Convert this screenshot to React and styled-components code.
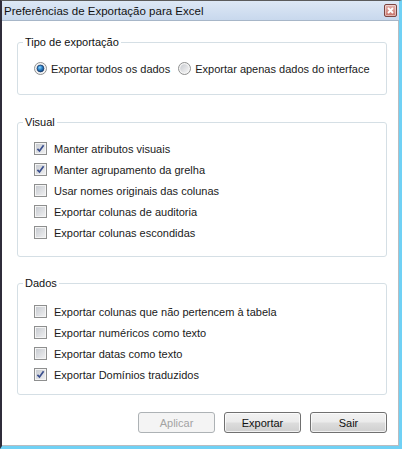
import React from "react";
import styled, { createGlobalStyle } from "styled-components";

const GlobalStyle = createGlobalStyle`
  html, body {
    margin: 0;
    padding: 0;
    background: #ffffff;
  }
  * {
    box-sizing: border-box;
  }
`;

const Window = styled.div`
  width: 402px;
  height: 449px;
  display: flex;
  flex-direction: column;
  border-top: 1px solid #5b5b5b;
  border-left: 2px solid #2f2c3a;
  border-right: 3px solid #70d1f5;
  border-bottom: 3px solid #70d1f5;
  font-family: "Liberation Sans", Arial, sans-serif;
  font-size: 11px;
  color: #1a1a1a;
`;

const TitleBar = styled.div`
  height: 20px;
  flex: none;
  display: flex;
  align-items: center;
  justify-content: space-between;
  padding: 0 2px 0 2px;
  background: linear-gradient(#dde8f5, #c8d8ed);
  border-bottom: 1px solid #a7b6c8;
`;

const Title = styled.span`
  font-size: 11.5px;
  color: #111;
  padding-top: 1px;
`;

const CloseButton = styled.span`
  width: 13px;
  height: 13px;
  display: flex;
  align-items: center;
  justify-content: center;
  border: 1px solid #7d4540;
  border-radius: 2px;
  background: linear-gradient(#e3b3ae, #c8746b);
  box-shadow: inset 0 0 0 1px rgba(255, 255, 255, 0.45);
`;

const Body = styled.div`
  flex: 1;
  display: flex;
  flex-direction: column;
  background: #ffffff;
  border-right: 1px solid #b8bcc1;
  border-bottom: 1px solid #b8bcc1;
  padding-top: 14px;
`;

const Group = styled.fieldset`
  margin: ${(p) => p.$top || 0}px 11px 0 15px;
  padding: ${(p) => p.$padTop}px 0 ${(p) => p.$padBottom}px 16px;
  border: 1px solid #d5dfe5;
  border-radius: 3px;
  min-width: 0;
`;

const Legend = styled.legend`
  margin-left: -11px;
  padding: 0 2px;
  line-height: 14px;
  color: #111;
`;

const Row = styled.label`
  height: 21px;
  display: flex;
  align-items: center;
  gap: ${(p) => p.$gap || 6}px;
  white-space: nowrap;
`;

const InlineRow = styled.div`
  display: flex;
  align-items: center;
  gap: 8px;
`;

const Box = styled.span`
  width: 13px;
  height: 13px;
  flex: none;
  display: flex;
  align-items: center;
  justify-content: center;
  border: 1px solid #8e8f8f;
  background: linear-gradient(135deg, #c4c8ce, #f2f2f3);
  box-shadow: inset 0 0 0 1px #f4f4f4;
`;

const Round = styled.svg`
  flex: none;
`;

const Footer = styled.div`
  display: flex;
  justify-content: flex-end;
  gap: 9px;
  margin: 17px 11px 0 0;
`;

const Button = styled.button`
  width: 77px;
  height: 21px;
  padding: 0;
  font-family: inherit;
  font-size: 11px;
  border-radius: 3px;
  color: ${(p) => (p.disabled ? "#a3a3a3" : "#111")};
  border: 1px solid ${(p) => (p.disabled ? "#adb2b5" : "#707070")};
  background: ${(p) =>
    p.disabled
      ? "#f4f4f4"
      : "linear-gradient(#f2f2f2 0%, #ebebeb 48%, #dddddd 52%, #cfcfcf 100%)"};
  box-shadow: ${(p) =>
    p.disabled ? "none" : "inset 0 0 0 1px rgba(255,255,255,0.7)"};
`;

const Checkbox = ({ checked, label }) => (
  <Row $gap={7}>
    <Box>
      {checked && (
        <svg width="9" height="9" viewBox="0 0 9 9">
          <path
            d="M1.4 4.8 L3.5 7 L7.6 1.2"
            fill="none"
            stroke="#3a4f8e"
            strokeWidth="1.7"
          />
        </svg>
      )}
    </Box>
    {label}
  </Row>
);

const Radio = ({ checked, label }) => (
  <Row $gap={4}>
    <Round width="13" height="13" viewBox="0 0 13 13">
      <defs>
        <linearGradient id="rg" x1="0" y1="0" x2="1" y2="1">
          <stop offset="0" stopColor="#c8cbd0" />
          <stop offset="1" stopColor="#f6f6f6" />
        </linearGradient>
        <radialGradient id="dot" cx="0.4" cy="0.35" r="0.7">
          <stop offset="0" stopColor="#8ad6ff" />
          <stop offset="0.5" stopColor="#2a7fc6" />
          <stop offset="1" stopColor="#0d3a73" />
        </radialGradient>
      </defs>
      <circle cx="6.5" cy="6.5" r="6" fill="#f4f4f4" stroke="#8e8f8f" />
      <circle cx="6.5" cy="6.5" r="4.3" fill="url(#rg)" />
      {checked && (
        <circle cx="6.5" cy="6.5" r="3.4" fill="url(#dot)" stroke="#1c3f6e" strokeWidth="0.8" />
      )}
    </Round>
    {label}
  </Row>
);

const visual = [
  { label: "Manter atributos visuais", checked: true },
  { label: "Manter agrupamento da grelha", checked: true },
  { label: "Usar nomes originais das colunas", checked: false },
  { label: "Exportar colunas de auditoria", checked: false },
  { label: "Exportar colunas escondidas", checked: false },
];

const dados = [
  { label: "Exportar colunas que não pertencem à tabela", checked: false },
  { label: "Exportar numéricos como texto", checked: false },
  { label: "Exportar datas como texto", checked: false },
  { label: "Exportar Domínios traduzidos", checked: true },
];

const App = () => {
  return (
    <>
      <GlobalStyle />
      <Window>
        <TitleBar>
          <Title>Preferências de Exportação para Excel</Title>
          <CloseButton>
            <svg width="7" height="7" viewBox="0 0 7 7">
              <path d="M1 1 L6 6 M6 1 L1 6" stroke="#fff" strokeWidth="1.8" />
            </svg>
          </CloseButton>
        </TitleBar>
        <Body>
          <Group $padTop={9} $padBottom={15}>
            <Legend>Tipo de exportação</Legend>
            <InlineRow>
              <Radio checked label="Exportar todos os dados" />
              <Radio label="Exportar apenas dados do interface" />
            </InlineRow>
          </Group>

          <Group $top={20} $padTop={9} $padBottom={13}>
            <Legend>Visual</Legend>
            {visual.map((v) => (
              <Checkbox key={v.label} {...v} />
            ))}
          </Group>

          <Group $top={19} $padTop={11} $padBottom={9}>
            <Legend>Dados</Legend>
            {dados.map((v) => (
              <Checkbox key={v.label} {...v} />
            ))}
          </Group>

          <Footer>
            <Button disabled>Aplicar</Button>
            <Button>Exportar</Button>
            <Button>Sair</Button>
          </Footer>
        </Body>
      </Window>
    </>
  );
};

export default App;
